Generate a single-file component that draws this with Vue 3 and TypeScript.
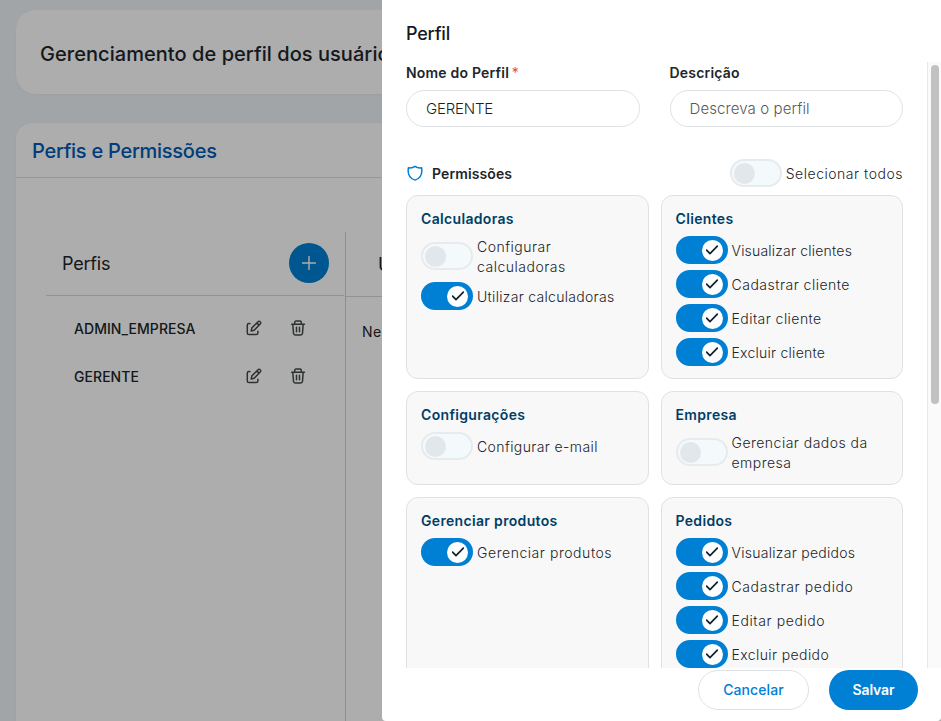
<script setup lang="ts">
import { ref, reactive } from 'vue'

interface Permission {
  label: string
  on: boolean
  /** letter spacing of the label, px */
  track: number
}
interface Group {
  title: string
  items: Permission[]
}

const profiles = ['ADMIN_EMPRESA', 'GERENTE']
const name = ref('GERENTE')
const description = ref('')
const selectAll = ref(false)

const groups = reactive<Group[]>([
  {
    title: 'Calculadoras',
    items: [
      { label: 'Configurar calculadoras', on: false, track: 0.5 },
      { label: 'Utilizar calculadoras', on: true, track: 0.3 },
    ],
  },
  {
    title: 'Clientes',
    items: [
      { label: 'Visualizar clientes', on: true, track: 0.2 },
      { label: 'Cadastrar cliente', on: true, track: 0.5 },
      { label: 'Editar cliente', on: true, track: 0.45 },
      { label: 'Excluir cliente', on: true, track: 0.25 },
    ],
  },
  { title: 'Configurações', items: [{ label: 'Configurar e-mail', on: false, track: 0.4 }] },
  { title: 'Empresa', items: [{ label: 'Gerenciar dados da empresa', on: false, track: 0.48 }] },
  { title: 'Gerenciar produtos', items: [{ label: 'Gerenciar produtos', on: true, track: 0.55 }] },
  {
    title: 'Pedidos',
    items: [
      { label: 'Visualizar pedidos', on: true, track: 0.28 },
      { label: 'Cadastrar pedido', on: true, track: 0.62 },
      { label: 'Editar pedido', on: true, track: 0.6 },
      { label: 'Excluir pedido', on: true, track: 0.4 },
    ],
  },
])

function toggleAll() {
  selectAll.value = !selectAll.value
  groups.forEach((g) => g.items.forEach((i) => (i.on = selectAll.value)))
}
</script>

<template>
  <div class="screen">
    <main class="page">
      <section class="banner"><h1>Gerenciamento de perfil dos usuários</h1></section>
      <section class="panel">
        <header class="panel-head"><h2>Perfis e Permissões</h2></header>
        <div class="columns">
          <div class="profiles">
            <div class="profiles-head">
              <h3>Perfis</h3>
              <button class="add" aria-label="Adicionar">
                <svg width="14" height="14" viewBox="0 0 14 14"><path d="M7 0.5V13.5M0.5 7H13.5" /></svg>
              </button>
            </div>
            <ul>
              <li v-for="p in profiles" :key="p">
                <span class="profile-name">{{ p }}</span>
                <svg class="icon" width="16" height="16" viewBox="0 0 16 16">
                  <path d="M4 3.6H2.9C1.9 3.6 1.3 4.2 1.3 5.2V12.9C1.3 13.9 1.9 14.6 2.9 14.6H10.2C11.2 14.6 11.9 13.9 11.9 12.9V11.2" />
                  <path d="M5.2 11L5.9 7.9L12 1.8C12.7 1.1 13.6 1.1 14.2 1.7C14.9 2.3 14.9 3.3 14.2 4L8.2 10.2Z M10.9 3.1L13 5.1" />
                </svg>
                <svg class="icon" width="16" height="16" viewBox="0 0 16 16">
                  <path d="M1.6 4.2H14.4M2.8 4.2L3.5 13.2C3.6 14.3 4.2 14.9 5.2 14.9H10.8C11.8 14.9 12.4 14.3 12.5 13.2L13.2 4.2M4.7 4V2.4C4.7 1.6 5.2 1.1 6 1.1H10C10.8 1.1 11.3 1.6 11.3 2.4V4M6.5 7.2V11.8M9.5 7.2V11.8" />
                </svg>
              </li>
            </ul>
          </div>
          <div class="users">
            <div class="users-head"><h3>Usuários</h3></div>
            <p>Nenhum usuário</p>
          </div>
        </div>
      </section>
    </main>

    <div class="backdrop"></div>

    <aside class="drawer">
      <h2 class="drawer-title">Perfil</h2>
      <div class="drawer-body">
        <div class="content">
          <div class="fields">
            <label class="field">
              <span class="field-label">Nome do Perfil <i>*</i></span>
              <input v-model="name" class="name-input" type="text" />
            </label>
            <label class="field">
              <span class="field-label">Descrição</span>
              <input v-model="description" type="text" placeholder="Descreva o perfil" />
            </label>
          </div>

          <div class="perm-head">
            <svg class="shield" width="18" height="16" viewBox="0 0 18 16">
              <path d="M9 1.3C10.7 2.7 13 3.2 15.6 2.8C16.6 8.9 14.2 13.4 9 15.1C3.8 13.4 1.4 8.9 2.4 2.8C5 3.2 7.3 2.7 9 1.3Z" />
            </svg>
            <h3>Permissões</h3>
            <div class="option">
              <button class="switch" :class="{ on: selectAll }" role="switch" @click="toggleAll">
                <span class="knob"></span>
              </button>
              <span class="option-label">Selecionar todos</span>
            </div>
          </div>

          <div class="cards">
            <section v-for="g in groups" :key="g.title" class="card">
              <h4>{{ g.title }}</h4>
              <div v-for="item in g.items" :key="item.label" class="option">
                <button class="switch" :class="{ on: item.on }" role="switch" @click="item.on = !item.on">
                  <span class="knob">
                    <svg v-if="item.on" width="12" height="10" viewBox="0 0 12 10"><path d="M0.6 5.2L4 8.7L11.3 1.2" /></svg>
                  </span>
                </button>
                <span class="option-label" :style="{ letterSpacing: item.track + 'px' }">{{ item.label }}</span>
              </div>
            </section>
          </div>
        </div>
        <div class="scrollbar"><div class="thumb"></div></div>
      </div>
      <footer class="actions">
        <button class="cancel">Cancelar</button>
        <button class="save">Salvar</button>
      </footer>
    </aside>
  </div>
</template>

<style>
body {
  background: #adadad;
  overflow: hidden;
}
</style>

<style scoped>
* {
  box-sizing: border-box;
}
h1, h2, h3, h4, p, ul {
  margin: 0;
  padding: 0;
}
button {
  font: inherit;
  border: 0;
  padding: 0;
  flex: none;
}
.screen {
  position: relative;
  width: 941px;
  height: 721px;
  overflow: hidden;
  background: #eef4f8;
  color: #212529;
  font-family: Inter, "Open Sans", sans-serif;
}
svg path {
  fill: none;
  stroke-linecap: round;
  stroke-linejoin: round;
}
.page {
  width: 941px;
  padding: 10px 0 0 16px;
}
.banner {
  height: 84px;
  padding: 0 24px;
  border-radius: 20px 0 0 20px;
  background: #fff;
  display: flex;
  align-items: center;
  box-shadow: 0 1px 3px rgba(0, 0, 0, 0.04);
}
.banner h1 {
  padding-top: 3px;
  font-size: 20px;
  font-weight: 500;
  line-height: 26px;
  letter-spacing: 0.05px;
  white-space: nowrap;
}
.panel {
  height: 620px;
  margin-top: 29px;
  border-radius: 16px 0 0 0;
  background: #fff;
  box-shadow: 0 0 3px rgba(0, 0, 0, 0.05);
}
.panel-head {
  height: 55px;
  padding: 2px 16px 0;
  border-bottom: 1px solid #dcdfe2;
  display: flex;
  align-items: center;
}
.panel-head h2 {
  font-size: 20px;
  font-weight: 500;
  color: #005ab4;
  letter-spacing: -0.27px;
}
.columns {
  display: flex;
  padding: 54px 0 0 30px;
}
.profiles {
  width: 300px;
  height: 511px;
  border-right: 1px solid #cfd2d5;
}
.profiles-head {
  height: 64px;
  margin-right: 1px;
  padding: 0 15px 1px 16px;
  border-bottom: 1px solid #d5d8db;
  display: flex;
  align-items: center;
  justify-content: space-between;
}
.columns h3 {
  font-size: 18px;
  font-weight: 400;
  letter-spacing: -0.2px;
}
.add {
  width: 40px;
  height: 40px;
  border-radius: 50%;
  background: #0080d4;
  display: grid;
  place-items: center;
}
.add path {
  stroke: #fff;
  stroke-width: 1.4;
}
ul {
  list-style: none;
  padding: 8px 39px 0 28px;
}
li {
  height: 48px;
  display: flex;
  align-items: center;
  gap: 28px;
}
.profile-name {
  flex: 1;
  font-size: 14px;
  font-weight: 500;
  letter-spacing: 0.05px;
}
.icon path {
  stroke: #45484b;
  stroke-width: 1.5;
}
.users {
  flex: 1;
}
.users-head {
  height: 65px;
  padding-left: 32px;
  border-bottom: 1px solid #d5d8db;
  display: flex;
  align-items: center;
}
.users p {
  padding: 25px 16px;
  font-size: 14px;
  line-height: 20px;
  letter-spacing: 0.5px;
}
.backdrop {
  position: absolute;
  inset: 0;
  background: rgba(0, 0, 0, 0.32);
}
.drawer {
  position: absolute;
  top: 0;
  right: 0;
  width: 559px;
  height: 721px;
  border-radius: 0 0 4px 4px;
  background: #fff;
  display: flex;
  flex-direction: column;
}
.drawer-title {
  height: 62px;
  padding: 22px 24px 0;
  font-size: 18px;
  font-weight: 500;
  line-height: 24px;
  letter-spacing: -0.2px;
  color: #17191c;
}
.drawer-body {
  height: 606px;
  overflow: hidden;
  display: flex;
  justify-content: space-between;
}
.content {
  width: 521px;
  padding-left: 24px;
}
.fields {
  display: grid;
  grid-template-columns: 1fr 1fr;
  gap: 30px;
}
.field {
  display: flex;
  flex-direction: column;
  gap: 7px;
}
.field-label {
  font-size: 14px;
  font-weight: 600;
  line-height: 21px;
  letter-spacing: 0.2px;
}
.field-label i {
  font-style: normal;
  font-weight: 400;
  letter-spacing: 0;
  margin-left: -1px;
  color: #f0455a;
}
input {
  width: 100%;
  height: 37px;
  padding: 0 19px;
  border: 1px solid #dfe2e5;
  border-radius: 19px;
  outline: none;
  background: #fff;
  font: 300 15px Inter, sans-serif;
  color: #1c1e20;
  letter-spacing: 0.1px;
}
.name-input {
  letter-spacing: -0.2px;
}
input::placeholder {
  color: #55595d;
  opacity: 1;
}
.perm-head {
  height: 28px;
  margin: 32px 0 8px;
  display: flex;
  align-items: center;
}
.shield path {
  stroke: #0080d4;
  stroke-width: 1.5;
}
.perm-head h3 {
  flex: 1;
  padding-left: 8px;
  font-size: 14px;
  font-weight: 600;
  letter-spacing: 0.1px;
}
.cards {
  display: grid;
  grid-template-columns: 1fr 1fr;
  gap: 12px;
}
.card {
  padding: 12px 14px;
  border: 1px solid #dee2e6;
  border-radius: 12px;
  background: #f8f8f8;
  display: flex;
  flex-direction: column;
  gap: 6px;
}
.card h4 {
  height: 20px;
  margin-bottom: 2px;
  padding-top: 1px;
  font-size: 14px;
  font-weight: 600;
  line-height: 20px;
  letter-spacing: 0.33px;
  color: #003e66;
}
.option {
  display: flex;
  align-items: center;
  gap: 4px;
}
.switch {
  width: 52px;
  height: 28px;
  padding: 0 2px;
  border: 2px solid #e6ebee;
  border-radius: 14px;
  background: #f4f9fc;
  display: flex;
  align-items: center;
}
.knob {
  width: 21px;
  height: 21px;
  border-radius: 50%;
  background: #e1e7eb;
  display: grid;
  place-items: center;
}
.switch.on {
  border-color: #0080d4;
  background: #0080d4;
  justify-content: flex-end;
  padding-right: 3px;
}
.switch.on .knob {
  background: #fff;
}
.knob path {
  stroke: #10202e;
  stroke-width: 1.7;
}
.option-label {
  margin-bottom: -1px;
  padding-top: 1px;
  font-size: 14px;
  font-weight: 300;
  line-height: 20px;
  letter-spacing: 0.52px;
}
.scrollbar {
  width: 14px;
  padding: 3px 2px 0 3px;
  border-left: 1px solid #e8e8e8;
  background: #fafafa;
}
.thumb {
  width: 8px;
  height: 339px;
  border-radius: 4px;
  background: #c1c1c1;
}
.actions {
  padding: 2px 23px 0;
  display: flex;
  justify-content: flex-end;
  gap: 20px;
}
.actions button {
  height: 40px;
  padding-bottom: 1px;
  border-radius: 20px;
  font-size: 14px;
  font-weight: 500;
}
.actions .cancel {
  width: 111px;
  border: 1px solid #dee2e6;
  background: #fff;
  color: #0080d4;
  letter-spacing: 0.1px;
}
.actions .save {
  width: 89px;
  background: #0080d4;
  color: #fff;
  font-weight: 600;
  letter-spacing: -0.1px;
}
</style>
